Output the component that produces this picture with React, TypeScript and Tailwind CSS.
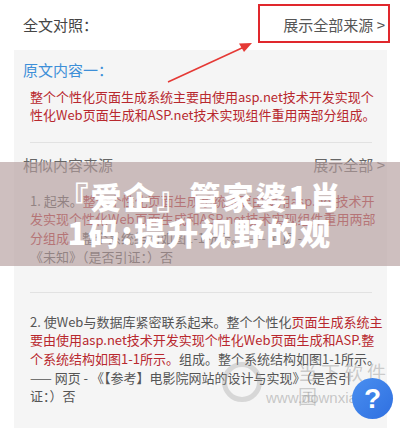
import React from "react";

const R = ({ children }: { children: React.ReactNode }) => (
  <span className="text-[#b8282e]">{children}</span>
);

export default function App() {
  return (
    <div className="relative w-[400px] h-[428px] overflow-hidden bg-white font-['Noto_Sans_CJK_SC','Noto_Sans',sans-serif] text-[#555]">
      {/* header */}
      <div className="h-[50px] flex items-center justify-between pl-[23px] pr-[15px] text-[15px] text-[#444]">
        <span>全文对照：</span>
        <span className="text-[#555]">展示全部来源 &gt;</span>
      </div>

      {/* panel */}
      <div className="ml-[14px] w-[373px] h-[378px] bg-[#f5f5f5] pl-[9px] pt-[9px]">
        <div className="text-[15px] leading-[22px] text-[#3d8fd8]">原文内容一：</div>
        <div className="mt-[7px] ml-[7px] text-[13px] leading-[18px] text-[#b8282e] whitespace-nowrap">
          <div>整个个性化页面生成系统主要由使用asp.net技术开发实现个</div>
          <div>性化Web页面生成和ASP.net技术实现组件重用两部分组成。</div>
        </div>
        <div className="mt-[18px] ml-[7px] mr-[15px] h-px bg-[#e2e2e2]" />
        <div className="mt-[11px] flex items-center justify-between pr-[2px] text-[15px] leading-[22px] text-[#666]">
          <span>相似内容来源</span>
          <span>展示全部 &gt;</span>
        </div>
        <div className="mt-[15.6px] ml-[7px] text-[13px] leading-[18.7px] whitespace-nowrap text-[#555]">
          <div>
            1. 起来。<R>整个个性化页面生成系统主要由使用asp.net技术开</R>
          </div>
          <div>
            <R>发实现个性化Web页面生成和ASP.net技术实现组件重用两部</R>
          </div>
          <div>
            <R>分组成。</R>整个系统结构如图1-1所示。—— 网页 -
          </div>
          <div>《未知》（是否引证：）否</div>
        </div>
        <div className="mt-[25.6px] ml-[7px] mr-[15px] h-px bg-[#e2e2e2]" />
        <div className="mt-[19.6px] ml-[7px] text-[13px] leading-[18.7px] whitespace-nowrap text-[#555]">
          <div>
            2. 使Web与数据库紧密联系起来。整个个性化<R>页面生成系统主</R>
          </div>
          <div>
            <R>要由使用asp.net技术开发实现个性化Web页面生成和ASP.整</R>
          </div>
          <div>
            <R>个系统结构如图1-1所示。</R>组成。整个系统结构如图1-1所示。
          </div>
          <div>—— 网页 - 《【参考】电影院网站的设计与实现》（是否引</div>
          <div>证：）否</div>
        </div>
      </div>

      {/* red annotation box and arrow */}
      <div className="absolute left-[258px] top-[4px] w-[132px] h-[39px] border-2 border-[#e0282d]" />
      <svg className="absolute left-0 top-0" width="400" height="100" viewBox="0 0 400 100">
        <line x1="168" y1="82" x2="243" y2="47.5" stroke="#e53935" strokeWidth="1.6" />
        <polygon points="252,43 239,43.5 244,52" fill="#e53935" />
      </svg>

      {/* title overlay band */}
      <div className="absolute left-0 top-[162px] w-[400px] h-[104px] bg-[rgba(180,156,156,0.65)] flex flex-col items-center justify-center text-white font-black text-[31px] leading-[36px] tracking-[2px]">
        <div>『爱企』管家婆1肖</div>
        <div>1码:提升视野的观</div>
      </div>

      {/* watermark */}
      <div className="absolute left-[222px] top-[362px] w-[40px] h-[40px] rounded-full border-[5px] border-[rgba(160,160,160,0.35)]" />
      <div className="absolute left-[298px] top-[360px] text-[19px] leading-[24px] tracking-[4px] text-[rgba(150,150,150,0.45)]">当下软件园</div>
      <div className="absolute left-[266px] top-[388px] text-[15px] leading-[20px] text-[rgba(150,150,150,0.5)] font-['Liberation_Sans',sans-serif]">www.downxia.com</div>
      <div className="absolute left-[352px] top-[378px] w-[41px] h-[41px] rounded-full bg-gradient-to-br from-[#4a8ff0] to-[#2f6fe0] flex items-center justify-center text-white text-[28px] font-bold font-['Liberation_Sans',sans-serif]">?</div>
    </div>
  );
}
